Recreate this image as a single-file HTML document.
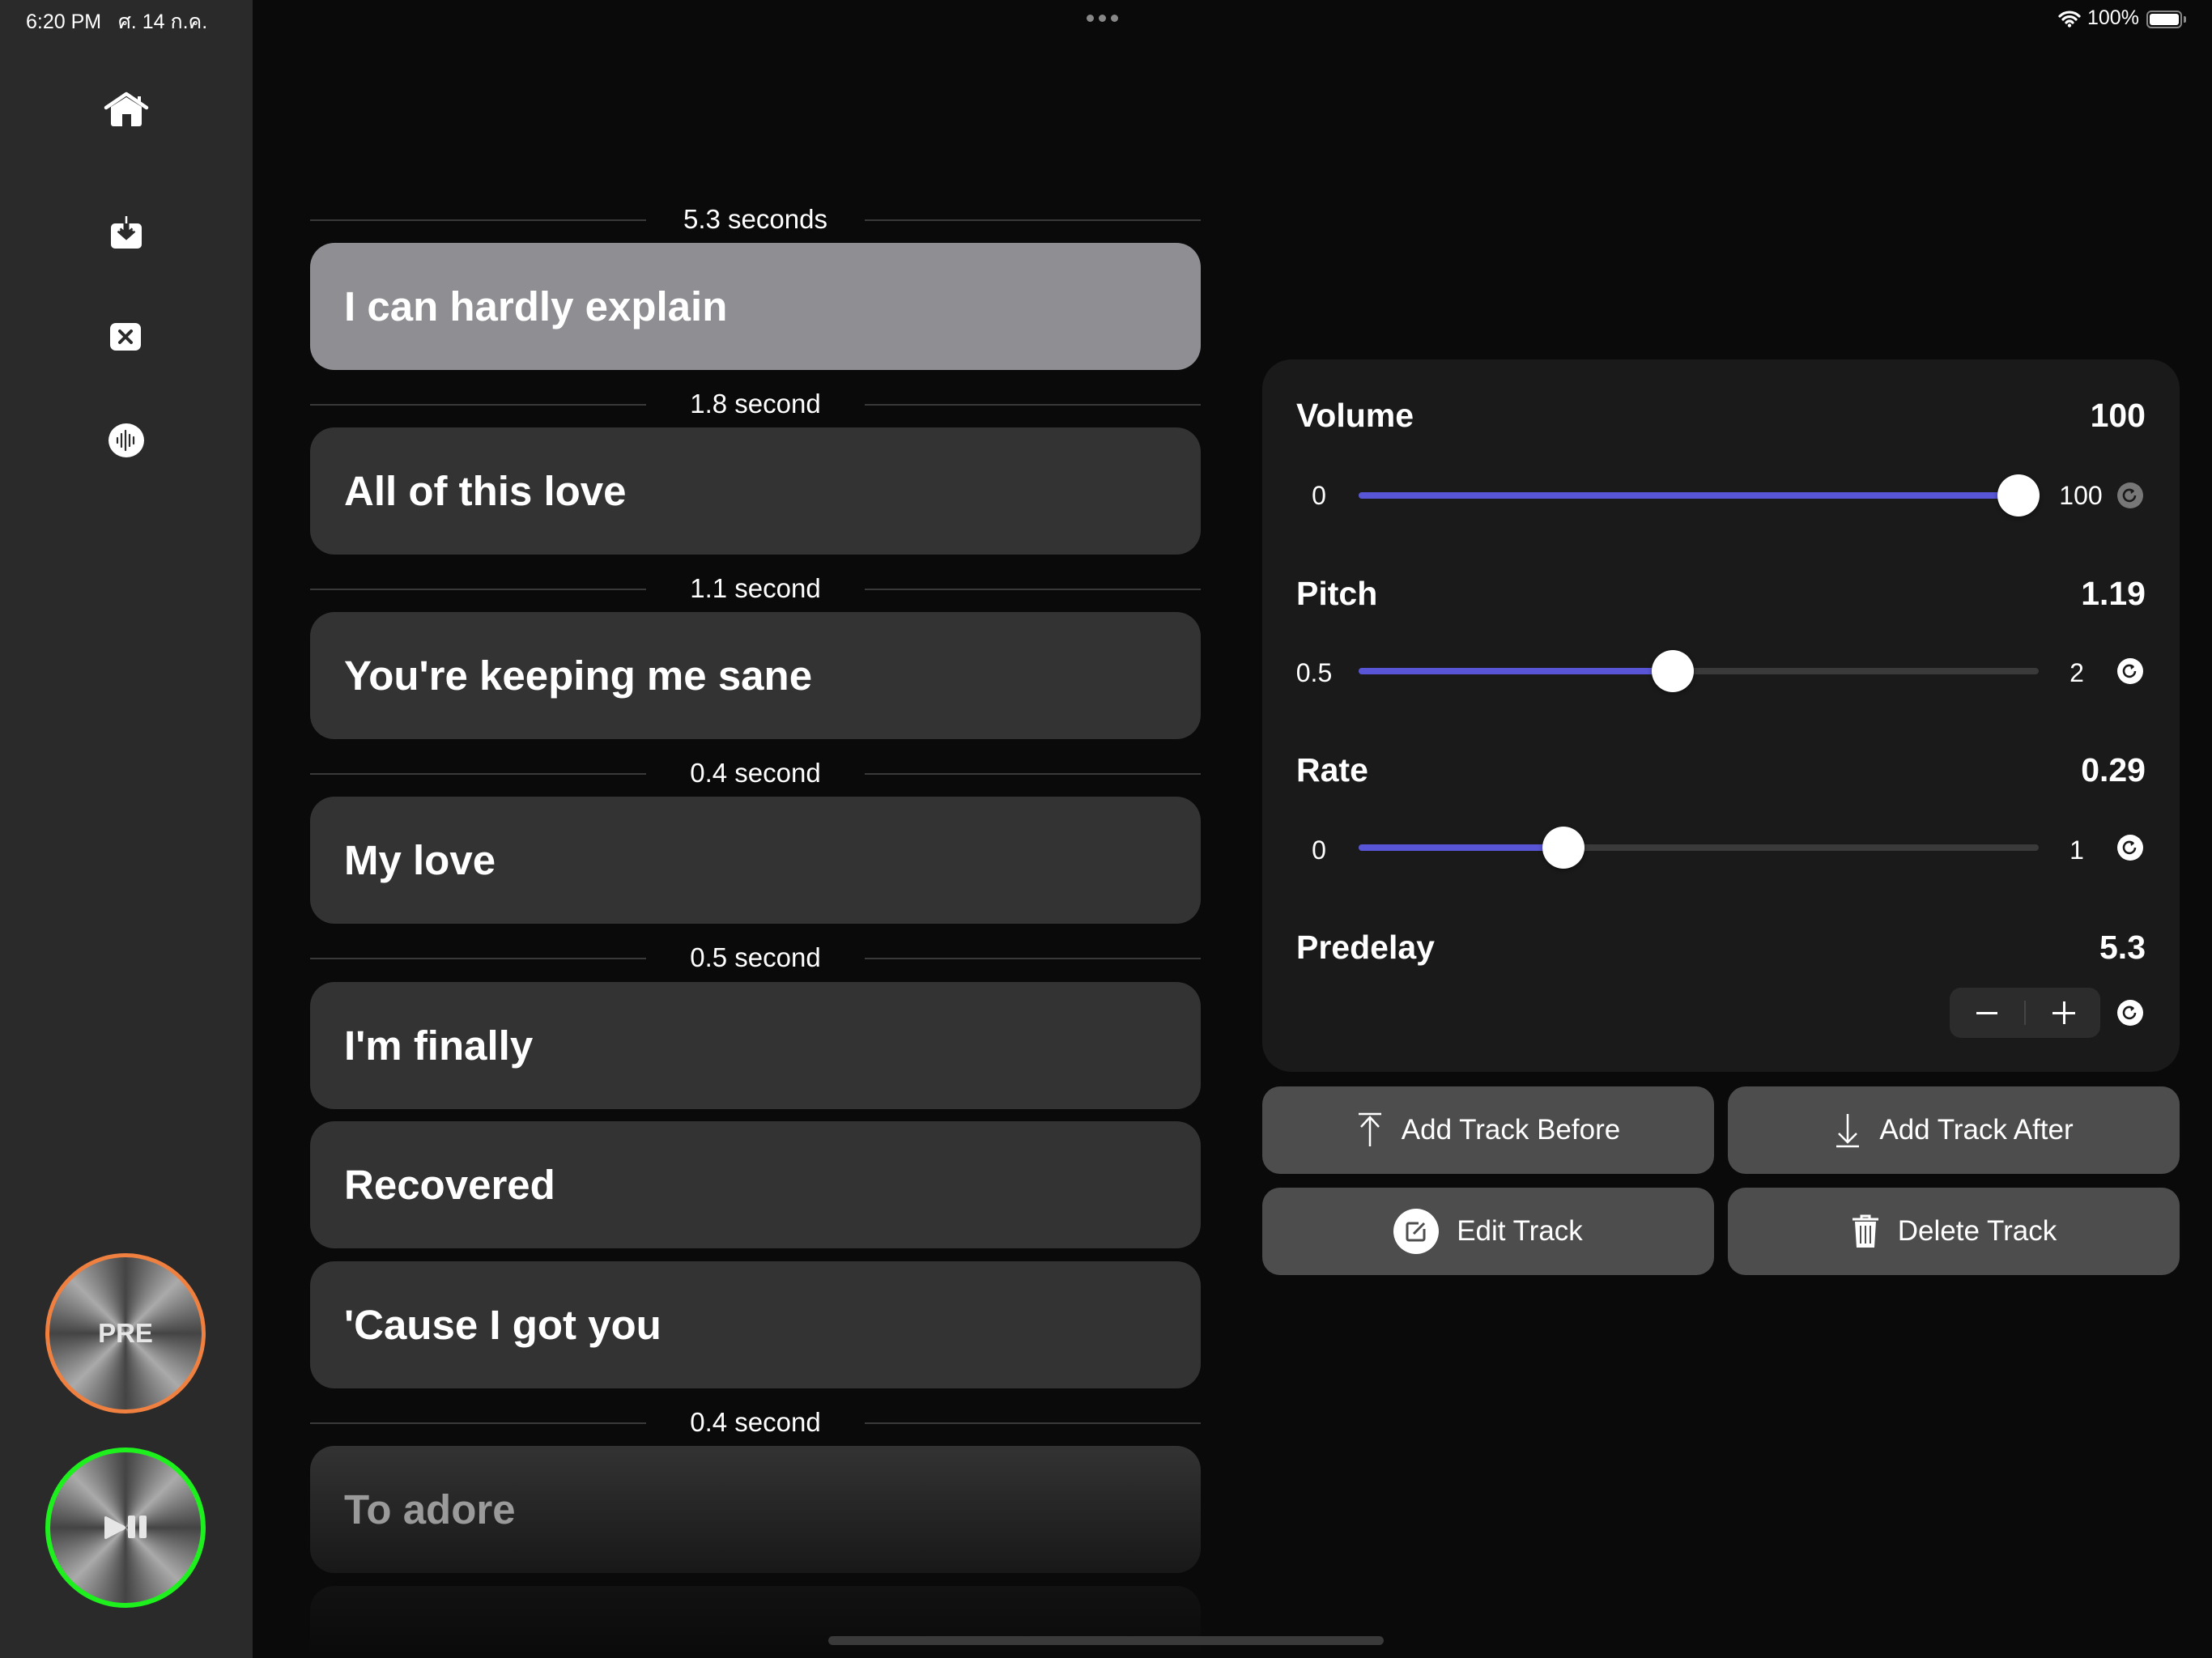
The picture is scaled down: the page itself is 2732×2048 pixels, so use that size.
<!DOCTYPE html>
<html style="width:2732px;height:2048px;overflow:hidden"><head><meta charset="utf-8"><style>
*{margin:0;padding:0;box-sizing:border-box}
body{width:2732px;height:2048px;background:#0a0a0a;position:relative;overflow:hidden;font-family:"Liberation Sans","Noto Sans CJK SC",sans-serif;color:#fff}
.abs{position:absolute}
.side{left:0;top:0;width:312px;height:2048px;background:#2a2a2a}
.sep{position:absolute;left:383px;width:1100px;height:40px}
.sep .l{position:absolute;top:20px;height:2px;background:#3a3a3a;width:415px}
.sep .t{position:absolute;left:0;width:1100px;text-align:center;font-size:33px;top:0;line-height:40px}
.card{position:absolute;left:383px;width:1100px;height:157px;border-radius:30px;background:#333;font-size:51px;font-weight:bold;line-height:157px;padding-left:42px}
.panel{left:1559px;top:444px;width:1133px;height:880px;background:#1a1a1a;border-radius:36px}
.lbl{position:absolute;font-size:41px;font-weight:bold}
.val{position:absolute;right:42px;font-size:41px;font-weight:bold;text-align:right}
.mn{position:absolute;font-size:32px;text-align:center;width:70px}
.track{position:absolute;left:119px;width:840px;height:8px;border-radius:4px;background:#3a3a3a}
.fill{position:absolute;left:0;top:0;height:8px;border-radius:4px;background:#5856d6}
.knob{position:absolute;width:52px;height:52px;border-radius:50%;background:#fff;top:-22px;box-shadow:0 2px 6px rgba(0,0,0,.4)}
.rs{position:absolute;left:1056px;width:32px;height:32px;border-radius:50%;background:#fff}
.btn{position:absolute;width:558px;height:108px;border-radius:22px;background:#4d4d4d;font-size:35px;display:flex;align-items:center;justify-content:center;gap:22px}
.circ{position:absolute;left:56px;width:198px;height:198px;border-radius:50%;background:conic-gradient(#444 0deg,#aaa 45deg,#444 90deg,#aaa 135deg,#444 180deg,#aaa 225deg,#444 270deg,#aaa 315deg,#444 360deg);display:flex;align-items:center;justify-content:center;font-size:33px;font-weight:bold;color:#e6e6e6}
</style></head><body>
<div class="abs side"></div>
<div class="abs" style="left:32px;top:7px;font-size:25px">6:20 PM&nbsp;&nbsp;&nbsp;ศ. 14 ก.ค.</div>
<div class="abs" style="left:1342px;top:18px;display:flex;gap:6px"><i style="width:9px;height:9px;border-radius:50%;background:#888;display:block"></i><i style="width:9px;height:9px;border-radius:50%;background:#888;display:block"></i><i style="width:9px;height:9px;border-radius:50%;background:#888;display:block"></i></div>
<svg class="abs" style="left:2542px;top:12px" width="28" height="22" viewBox="0 0 28 22"><path d="M2 8a17 17 0 0 1 24 0M6 12a11 11 0 0 1 16 0M10 16a5 5 0 0 1 8 0" stroke="#fff" stroke-width="3.2" fill="none" stroke-linecap="round"/><circle cx="14" cy="19.5" r="2.2" fill="#fff"/></svg>
<div class="abs" style="left:2578px;top:8px;font-size:25px">100%</div>
<div class="abs" style="left:2651px;top:13px;width:44px;height:22px;border:2px solid #888;border-radius:6px;padding:2px"><div style="width:100%;height:100%;background:#fff;border-radius:3px"></div></div>
<div class="abs" style="left:2697px;top:20px;width:3px;height:8px;background:#888;border-radius:0 2px 2px 0"></div>

<svg class="abs" style="left:128px;top:113px" width="56" height="44" viewBox="0 0 56 44"><path d="M3 20L28 3L53 20" stroke="#fff" stroke-width="4.5" fill="none" stroke-linecap="round" stroke-linejoin="round"/><rect x="42" y="6" width="4" height="9" fill="#fff"/><path d="M9 19L28 7L47 19V40a3 3 0 0 1-3 3H12a3 3 0 0 1-3-3Z" fill="#fff"/><rect x="23" y="28" width="11" height="15" fill="#2a2a2a"/></svg>
<svg class="abs" style="left:135px;top:266px" width="42" height="42" viewBox="0 0 42 42"><rect x="2" y="10" width="38" height="31" rx="5" fill="#fff"/><path d="M21 1V26M12 18L21 26L30 18" stroke="#2a2a2a" stroke-width="7" fill="none"/><path d="M21 1V26M12 18L21 26L30 18" stroke="#fff" stroke-width="2.5" fill="none"/><path d="M21 10V26M13 19L21 26L29 19" stroke="#2a2a2a" stroke-width="3" fill="none"/></svg>
<svg class="abs" style="left:135px;top:398px" width="40" height="36" viewBox="0 0 40 36"><rect x="1" y="1" width="38" height="34" rx="7" fill="#fff"/><path d="M13 11L27 25M27 11L13 25" stroke="#2a2a2a" stroke-width="4" stroke-linecap="round"/></svg>
<svg class="abs" style="left:134px;top:522px" width="44" height="44" viewBox="0 0 44 44"><ellipse cx="22" cy="22" rx="22" ry="21" fill="#fff"/><path d="M11 19v6M16 14v16M21 10v24M26 15v14M31 18v8" stroke="#2a2a2a" stroke-width="2.2" stroke-linecap="round"/></svg>

<div class="circ" style="top:1548px;border:5px solid #f08040">PRE</div>
<div class="circ" style="top:1788px;border:6px solid #1ef01e"><svg width="56" height="30" viewBox="0 0 56 30"><path d="M2 3Q2 0 5 1.5L27 13Q29 15 27 17L5 28.5Q2 30 2 27Z" fill="#e6e6e6"/><rect x="31" y="0" width="9" height="28" rx="2" fill="#e6e6e6"/><rect x="45" y="0" width="9" height="28" rx="2" fill="#e6e6e6"/></svg></div>

<div class="sep" style="top:251px"><div class="l" style="left:0"></div><div class="l" style="right:0"></div><div class="t">5.3 seconds</div></div>
<div class="card" style="top:300px;background:#8e8e93">I can hardly explain</div>
<div class="sep" style="top:479px"><div class="l" style="left:0"></div><div class="l" style="right:0"></div><div class="t">1.8 second</div></div>
<div class="card" style="top:528px">All of this love</div>
<div class="sep" style="top:707px"><div class="l" style="left:0"></div><div class="l" style="right:0"></div><div class="t">1.1 second</div></div>
<div class="card" style="top:756px">You're keeping me sane</div>
<div class="sep" style="top:935px"><div class="l" style="left:0"></div><div class="l" style="right:0"></div><div class="t">0.4 second</div></div>
<div class="card" style="top:984px">My love</div>
<div class="sep" style="top:1163px"><div class="l" style="left:0"></div><div class="l" style="right:0"></div><div class="t">0.5 second</div></div>
<div class="card" style="top:1213px">I'm finally</div>
<div class="card" style="top:1385px">Recovered</div>
<div class="card" style="top:1558px">'Cause I got you</div>
<div class="sep" style="top:1737px"><div class="l" style="left:0"></div><div class="l" style="right:0"></div><div class="t">0.4 second</div></div>
<div class="card" style="top:1786px;background:linear-gradient(#333,#181818);color:#9a9a9a">To adore</div>
<div class="card" style="top:1959px;height:89px;border-radius:30px 30px 0 0;background:linear-gradient(#121212,#0a0a0a)"></div>
<div class="abs" style="left:1023px;top:2021px;width:686px;height:11px;border-radius:6px;background:#3a3a3a"></div>

<div class="abs panel">
 <div class="lbl" style="left:42px;top:46px">Volume</div><div class="val" style="top:46px">100</div>
 <div class="mn" style="left:35px;top:150px">0</div>
 <div class="track" style="top:164px"><div class="fill" style="width:810px"></div><div class="knob" style="left:789px"></div></div>
 <div class="mn" style="left:976px;top:150px">100</div>
 <div class="rs" style="top:152px;background:#777"><svg width="32" height="32" viewBox="0 0 32 32"><path d="M20 11a7 7 0 1 0 2 5" stroke="#1a1a1a" stroke-width="2.6" fill="none"/><path d="M16 8l5 3-4 3z" fill="#1a1a1a"/></svg></div>

 <div class="lbl" style="left:42px;top:266px">Pitch</div><div class="val" style="top:266px">1.19</div>
 <div class="mn" style="left:29px;top:369px">0.5</div>
 <div class="track" style="top:381px"><div class="fill" style="width:388px"></div><div class="knob" style="left:362px"></div></div>
 <div class="mn" style="left:971px;top:369px">2</div>
 <div class="rs" style="top:369px"><svg width="32" height="32" viewBox="0 0 32 32"><path d="M20 11a7 7 0 1 0 2 5" stroke="#1a1a1a" stroke-width="2.6" fill="none"/><path d="M16 8l5 3-4 3z" fill="#1a1a1a"/></svg></div>

 <div class="lbl" style="left:42px;top:484px">Rate</div><div class="val" style="top:484px">0.29</div>
 <div class="mn" style="left:35px;top:588px">0</div>
 <div class="track" style="top:599px"><div class="fill" style="width:252px"></div><div class="knob" style="left:227px"></div></div>
 <div class="mn" style="left:971px;top:588px">1</div>
 <div class="rs" style="top:587px"><svg width="32" height="32" viewBox="0 0 32 32"><path d="M20 11a7 7 0 1 0 2 5" stroke="#1a1a1a" stroke-width="2.6" fill="none"/><path d="M16 8l5 3-4 3z" fill="#1a1a1a"/></svg></div>

 <div class="lbl" style="left:42px;top:703px">Predelay</div><div class="val" style="top:703px">5.3</div>
 <div class="abs" style="left:849px;top:776px;width:186px;height:62px;border-radius:14px;background:#2c2c2c">
  <div class="abs" style="left:33px;top:30px;width:26px;height:3px;background:#fff"></div>
  <div class="abs" style="left:92px;top:16px;width:2px;height:30px;background:#444"></div>
  <div class="abs" style="left:127px;top:30px;width:28px;height:3px;background:#fff"></div>
  <div class="abs" style="left:140px;top:17px;width:3px;height:28px;background:#fff"></div>
 </div>
 <div class="rs" style="top:791px"><svg width="32" height="32" viewBox="0 0 32 32"><path d="M20 11a7 7 0 1 0 2 5" stroke="#1a1a1a" stroke-width="2.6" fill="none"/><path d="M16 8l5 3-4 3z" fill="#1a1a1a"/></svg></div>
</div>

<div class="btn" style="left:1559px;top:1342px"><svg width="34" height="44" viewBox="0 0 34 44"><path d="M3 2H31M17 6V42M6 18L17 6L28 18" stroke="#fff" stroke-width="2.5" fill="none"/></svg>Add Track Before</div>
<div class="btn" style="left:2134px;top:1342px"><svg width="34" height="44" viewBox="0 0 34 44"><path d="M3 42H31M17 2V37M6 26L17 37L28 26" stroke="#fff" stroke-width="2.5" fill="none"/></svg>Add Track After</div>
<div class="btn" style="left:1559px;top:1467px"><svg width="56" height="56" viewBox="0 0 56 56"><circle cx="28" cy="28" r="28" fill="#fff"/><path d="M31 18H19a2 2 0 0 0-2 2v17a2 2 0 0 0 2 2h17a2 2 0 0 0 2-2V25" stroke="#4d4d4d" stroke-width="3" fill="none"/><path d="M25 31l13-13" stroke="#4d4d4d" stroke-width="3"/></svg>Edit Track</div>
<div class="btn" style="left:2134px;top:1467px"><svg width="36" height="44" viewBox="0 0 36 44"><path d="M2 7H34M13 7V3h10v4" stroke="#fff" stroke-width="3" fill="none"/><path d="M5 10H31L29 42H7Z" fill="#fff"/><path d="M12 15v22M18 15v22M24 15v22" stroke="#4d4d4d" stroke-width="2"/></svg>Delete Track</div>
</body></html>
